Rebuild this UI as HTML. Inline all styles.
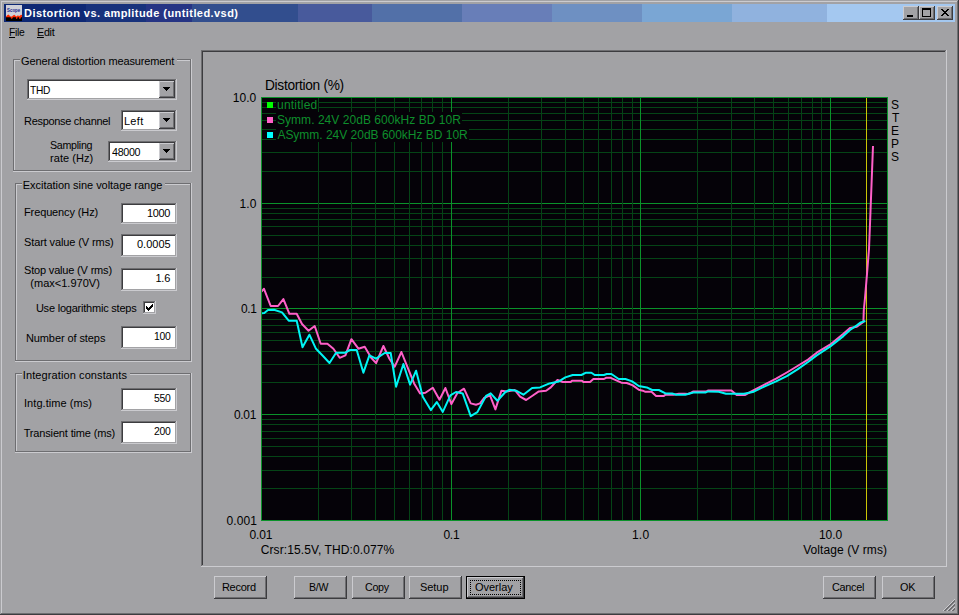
<!DOCTYPE html>
<html lang="en"><head><meta charset="utf-8"><title>Distortion vs. amplitude (untitled.vsd)</title>
<style>
html,body{margin:0;padding:0}
body{width:959px;height:615px;overflow:hidden;position:relative;background:#a2a2a5;font-family:"Liberation Sans", sans-serif;}
.r{position:absolute;box-sizing:border-box}
.t{position:absolute;white-space:nowrap;transform-origin:0 0;line-height:16px;color:#000;font-family:"Liberation Sans", sans-serif;font-size:11px}
.t u{text-decoration:underline;text-underline-offset:1px;text-decoration-thickness:1px}
svg{position:absolute;left:0;top:0}
</style></head><body>

<div class="r" style="left:1px;top:1px;width:957px;height:1px;background:#cbcbcf"></div><div class="r" style="left:1px;top:1px;width:1px;height:612px;background:#cbcbcf"></div>
<div class="r" style="left:0px;top:614px;width:959px;height:1px;background:#3c3c3f"></div><div class="r" style="left:958px;top:0px;width:1px;height:615px;background:#3c3c3f"></div>
<div class="r" style="left:1px;top:613px;width:957px;height:1px;background:#6e6e71"></div><div class="r" style="left:957px;top:1px;width:1px;height:613px;background:#6e6e71"></div>
<div class="r" style="left:4px;top:4px;width:82px;height:18px;background:#0e2874"></div>
<div class="r" style="left:86px;top:4px;width:60px;height:18px;background:#18327c"></div>
<div class="r" style="left:146px;top:4px;width:46px;height:18px;background:#263484"></div>
<div class="r" style="left:192px;top:4px;width:106px;height:18px;background:#324e8e"></div>
<div class="r" style="left:298px;top:4px;width:74px;height:18px;background:#485a9c"></div>
<div class="r" style="left:372px;top:4px;width:90px;height:18px;background:#5270a8"></div>
<div class="r" style="left:462px;top:4px;width:90px;height:18px;background:#687eb8"></div>
<div class="r" style="left:552px;top:4px;width:90px;height:18px;background:#6e90c2"></div>
<div class="r" style="left:642px;top:4px;width:90px;height:18px;background:#7aa6d4"></div>
<div class="r" style="left:732px;top:4px;width:95px;height:18px;background:#90b2de"></div>
<div class="r" style="left:827px;top:4px;width:128px;height:18px;background:#a4c8f0"></div>
<div class="r" style="left:6px;top:5px;width:16px;height:16px;background:#d0d0d8"></div>
<div class="r" style="left:6px;top:17px;width:16px;height:4px;background:#000"></div>
<svg width="959" height="615" viewBox="0 0 959 615" style="pointer-events:none"><path d="M6 16.500 L7.5 15 L8.5 14.6 L9.5 15.5 L10.5 16.500 L12 16.500 L13 15.6 L14.3 14.7 L15.5 15.8 L16 16.500 L17 16 L18 15.3 L19 16.300 L20 15.5 L21 14.8 L22 15 L22 17.300 L21 17.300 L20.2 18.900 L19.400 18.900 L19 17.300 L17.600 17.300 L17.100 19 L16.300 19 L16 17.300 L13 17.300 L12.100 18.700 L11.300 18.700 L10.5 17.300 L6 17.300 Z" fill="#ff2a00"/><text x="7" y="11.600" font-family="Liberation Sans, sans-serif" font-size="5.2" font-weight="700" fill="#20288a" textLength="13.2" lengthAdjust="spacingAndGlyphs">Scope</text></svg>
<span class="t" style="left:24.10px;top:5.00px;letter-spacing:0.434px;font-weight:700;color:#fff;">Distortion vs. amplitude (untitled.vsd)</span>
<div class="r" style="left:903px;top:6px;width:16px;height:14px;background:#3c3c3f"></div><div class="r" style="left:903px;top:6px;width:15px;height:13px;background:#cbcbcf"></div><div class="r" style="left:904px;top:7px;width:14px;height:12px;background:#6e6e71"></div><div class="r" style="left:904px;top:7px;width:13px;height:11px;background:#a2a2a5"></div>
<div class="r" style="left:919px;top:6px;width:16px;height:14px;background:#3c3c3f"></div><div class="r" style="left:919px;top:6px;width:15px;height:13px;background:#cbcbcf"></div><div class="r" style="left:920px;top:7px;width:14px;height:12px;background:#6e6e71"></div><div class="r" style="left:920px;top:7px;width:13px;height:11px;background:#a2a2a5"></div>
<div class="r" style="left:937px;top:6px;width:16px;height:14px;background:#3c3c3f"></div><div class="r" style="left:937px;top:6px;width:15px;height:13px;background:#cbcbcf"></div><div class="r" style="left:938px;top:7px;width:14px;height:12px;background:#6e6e71"></div><div class="r" style="left:938px;top:7px;width:13px;height:11px;background:#a2a2a5"></div>
<div class="r" style="left:907px;top:15px;width:6px;height:2px;background:#000"></div>
<div class="r" style="left:922px;top:8px;width:9px;height:9px;border:1px solid #000;border-top-width:2px"></div>
<div class="r" style="left:941px;top:9px;width:2px;height:1px;background:#000"></div>
<div class="r" style="left:947px;top:9px;width:2px;height:1px;background:#000"></div>
<div class="r" style="left:942px;top:10px;width:2px;height:1px;background:#000"></div>
<div class="r" style="left:946px;top:10px;width:2px;height:1px;background:#000"></div>
<div class="r" style="left:943px;top:11px;width:4px;height:1px;background:#000"></div>
<div class="r" style="left:944px;top:12px;width:2px;height:1px;background:#000"></div>
<div class="r" style="left:943px;top:13px;width:4px;height:1px;background:#000"></div>
<div class="r" style="left:942px;top:14px;width:2px;height:1px;background:#000"></div>
<div class="r" style="left:946px;top:14px;width:2px;height:1px;background:#000"></div>
<div class="r" style="left:941px;top:15px;width:2px;height:1px;background:#000"></div>
<div class="r" style="left:947px;top:15px;width:2px;height:1px;background:#000"></div>
<span class="t" style="left:9.46px;top:24.00px;letter-spacing:-0.300px;transform:scaleX(0.9404);"><u>F</u>ile</span><span class="t" style="left:37.42px;top:24.00px;letter-spacing:-0.300px;transform:scaleX(0.9766);"><u>E</u>dit</span>
<div class="r" style="left:13px;top:59px;width:7px;height:1px;background:#6e6e71"></div><div class="r" style="left:14px;top:60px;width:6px;height:1px;background:#cbcbcf"></div><div class="r" style="left:177px;top:59px;width:14px;height:1px;background:#6e6e71"></div><div class="r" style="left:177px;top:60px;width:13px;height:1px;background:#cbcbcf"></div><div class="r" style="left:13px;top:59px;width:1px;height:112px;background:#6e6e71"></div><div class="r" style="left:14px;top:60px;width:1px;height:110px;background:#cbcbcf"></div><div class="r" style="left:13px;top:170px;width:178px;height:1px;background:#6e6e71"></div><div class="r" style="left:13px;top:171px;width:179px;height:1px;background:#cbcbcf"></div><div class="r" style="left:190px;top:59px;width:1px;height:112px;background:#6e6e71"></div><div class="r" style="left:191px;top:59px;width:1px;height:113px;background:#cbcbcf"></div>
<span class="t" style="left:21.10px;top:53.00px;letter-spacing:-0.134px;">General distortion measurement</span>
<div class="r" style="left:15px;top:183px;width:7px;height:1px;background:#6e6e71"></div><div class="r" style="left:16px;top:184px;width:6px;height:1px;background:#cbcbcf"></div><div class="r" style="left:165px;top:183px;width:26px;height:1px;background:#6e6e71"></div><div class="r" style="left:165px;top:184px;width:25px;height:1px;background:#cbcbcf"></div><div class="r" style="left:15px;top:183px;width:1px;height:178px;background:#6e6e71"></div><div class="r" style="left:16px;top:184px;width:1px;height:176px;background:#cbcbcf"></div><div class="r" style="left:15px;top:360px;width:176px;height:1px;background:#6e6e71"></div><div class="r" style="left:15px;top:361px;width:177px;height:1px;background:#cbcbcf"></div><div class="r" style="left:190px;top:183px;width:1px;height:178px;background:#6e6e71"></div><div class="r" style="left:191px;top:183px;width:1px;height:179px;background:#cbcbcf"></div>
<span class="t" style="left:22.80px;top:177.00px;letter-spacing:-0.039px;">Excitation sine voltage range</span>
<div class="r" style="left:15px;top:373px;width:7px;height:1px;background:#6e6e71"></div><div class="r" style="left:16px;top:374px;width:6px;height:1px;background:#cbcbcf"></div><div class="r" style="left:130px;top:373px;width:61px;height:1px;background:#6e6e71"></div><div class="r" style="left:130px;top:374px;width:60px;height:1px;background:#cbcbcf"></div><div class="r" style="left:15px;top:373px;width:1px;height:79px;background:#6e6e71"></div><div class="r" style="left:16px;top:374px;width:1px;height:77px;background:#cbcbcf"></div><div class="r" style="left:15px;top:451px;width:176px;height:1px;background:#6e6e71"></div><div class="r" style="left:15px;top:452px;width:177px;height:1px;background:#cbcbcf"></div><div class="r" style="left:190px;top:373px;width:1px;height:79px;background:#6e6e71"></div><div class="r" style="left:191px;top:373px;width:1px;height:80px;background:#cbcbcf"></div>
<span class="t" style="left:22.80px;top:367.00px;letter-spacing:0.100px;">Integration constants</span>
<div class="r" style="left:27px;top:79px;width:150px;height:21px;background:#cbcbcf"></div><div class="r" style="left:27px;top:79px;width:149px;height:20px;background:#6e6e71"></div><div class="r" style="left:28px;top:80px;width:148px;height:19px;background:#a2a2a5"></div><div class="r" style="left:28px;top:80px;width:147px;height:18px;background:#3c3c3f"></div><div class="r" style="left:29px;top:81px;width:146px;height:17px;background:#fff"></div><div class="r" style="left:159px;top:81px;width:16px;height:17px;background:#3c3c3f"></div><div class="r" style="left:159px;top:81px;width:15px;height:16px;background:#cbcbcf"></div><div class="r" style="left:160px;top:82px;width:14px;height:15px;background:#6e6e71"></div><div class="r" style="left:160px;top:82px;width:13px;height:14px;background:#a2a2a5"></div><div class="r" style="left:163px;top:87px;width:7px;height:1px;background:#000"></div><div class="r" style="left:164px;top:88px;width:5px;height:1px;background:#000"></div><div class="r" style="left:165px;top:89px;width:3px;height:1px;background:#000"></div><div class="r" style="left:166px;top:90px;width:1px;height:1px;background:#000"></div><span class="t" style="left:30.10px;top:82.00px;letter-spacing:-0.300px;transform:scaleX(0.9252);">THD</span>
<span class="t" style="left:24.00px;top:113.00px;letter-spacing:-0.300px;transform:scaleX(0.9988);">Response channel</span><div class="r" style="left:121px;top:110px;width:56px;height:21px;background:#cbcbcf"></div><div class="r" style="left:121px;top:110px;width:55px;height:20px;background:#6e6e71"></div><div class="r" style="left:122px;top:111px;width:54px;height:19px;background:#a2a2a5"></div><div class="r" style="left:122px;top:111px;width:53px;height:18px;background:#3c3c3f"></div><div class="r" style="left:123px;top:112px;width:52px;height:17px;background:#fff"></div><div class="r" style="left:159px;top:112px;width:16px;height:17px;background:#3c3c3f"></div><div class="r" style="left:159px;top:112px;width:15px;height:16px;background:#cbcbcf"></div><div class="r" style="left:160px;top:113px;width:14px;height:15px;background:#6e6e71"></div><div class="r" style="left:160px;top:113px;width:13px;height:14px;background:#a2a2a5"></div><div class="r" style="left:163px;top:118px;width:7px;height:1px;background:#000"></div><div class="r" style="left:164px;top:119px;width:5px;height:1px;background:#000"></div><div class="r" style="left:165px;top:120px;width:3px;height:1px;background:#000"></div><div class="r" style="left:166px;top:121px;width:1px;height:1px;background:#000"></div><span class="t" style="left:123.90px;top:113.00px;letter-spacing:0.333px;">Left</span>
<span class="t" style="left:50.13px;top:137.00px;letter-spacing:-0.300px;transform:scaleX(0.9714);">Sampling</span><span class="t" style="left:50.10px;top:150.00px;letter-spacing:0.025px;">rate (Hz)</span><div class="r" style="left:108px;top:141px;width:69px;height:21px;background:#cbcbcf"></div><div class="r" style="left:108px;top:141px;width:68px;height:20px;background:#6e6e71"></div><div class="r" style="left:109px;top:142px;width:67px;height:19px;background:#a2a2a5"></div><div class="r" style="left:109px;top:142px;width:66px;height:18px;background:#3c3c3f"></div><div class="r" style="left:110px;top:143px;width:65px;height:17px;background:#fff"></div><div class="r" style="left:159px;top:143px;width:16px;height:17px;background:#3c3c3f"></div><div class="r" style="left:159px;top:143px;width:15px;height:16px;background:#cbcbcf"></div><div class="r" style="left:160px;top:144px;width:14px;height:15px;background:#6e6e71"></div><div class="r" style="left:160px;top:144px;width:13px;height:14px;background:#a2a2a5"></div><div class="r" style="left:163px;top:149px;width:7px;height:1px;background:#000"></div><div class="r" style="left:164px;top:150px;width:5px;height:1px;background:#000"></div><div class="r" style="left:165px;top:151px;width:3px;height:1px;background:#000"></div><div class="r" style="left:166px;top:152px;width:1px;height:1px;background:#000"></div><span class="t" style="left:112.40px;top:144.00px;letter-spacing:-0.300px;transform:scaleX(0.9722);">48000</span>
<span class="t" style="left:24.00px;top:204.00px;letter-spacing:-0.123px;">Frequency (Hz)</span><div class="r" style="left:121px;top:203px;width:56px;height:21px;background:#cbcbcf"></div><div class="r" style="left:121px;top:203px;width:55px;height:20px;background:#6e6e71"></div><div class="r" style="left:122px;top:204px;width:54px;height:19px;background:#a2a2a5"></div><div class="r" style="left:122px;top:204px;width:53px;height:18px;background:#3c3c3f"></div><div class="r" style="left:123px;top:205px;width:52px;height:17px;background:#fff"></div><span class="t" style="left:147.00px;top:205.00px;letter-spacing:-0.300px;transform:scaleX(0.9955);">1000</span>
<span class="t" style="left:24.00px;top:234.00px;letter-spacing:-0.111px;">Start value (V rms)</span><div class="r" style="left:121px;top:234px;width:56px;height:23px;background:#cbcbcf"></div><div class="r" style="left:121px;top:234px;width:55px;height:22px;background:#6e6e71"></div><div class="r" style="left:122px;top:235px;width:54px;height:21px;background:#a2a2a5"></div><div class="r" style="left:122px;top:235px;width:53px;height:20px;background:#3c3c3f"></div><div class="r" style="left:123px;top:236px;width:52px;height:19px;background:#fff"></div><span class="t" style="left:137.00px;top:236.00px;">0.0005</span>
<span class="t" style="left:24.00px;top:262.00px;letter-spacing:-0.176px;">Stop value (V rms)</span><div class="r" style="left:121px;top:268px;width:56px;height:23px;background:#cbcbcf"></div><div class="r" style="left:121px;top:268px;width:55px;height:22px;background:#6e6e71"></div><div class="r" style="left:122px;top:269px;width:54px;height:21px;background:#a2a2a5"></div><div class="r" style="left:122px;top:269px;width:53px;height:20px;background:#3c3c3f"></div><div class="r" style="left:123px;top:270px;width:52px;height:19px;background:#fff"></div><span class="t" style="left:155.50px;top:270.00px;letter-spacing:-0.250px;">1.6</span>
<span class="t" style="left:25.90px;top:330.00px;letter-spacing:-0.086px;">Number of steps</span><div class="r" style="left:121px;top:326px;width:56px;height:23px;background:#cbcbcf"></div><div class="r" style="left:121px;top:326px;width:55px;height:22px;background:#6e6e71"></div><div class="r" style="left:122px;top:327px;width:54px;height:21px;background:#a2a2a5"></div><div class="r" style="left:122px;top:327px;width:53px;height:20px;background:#3c3c3f"></div><div class="r" style="left:123px;top:328px;width:52px;height:19px;background:#fff"></div><span class="t" style="left:153.55px;top:328.00px;letter-spacing:-0.300px;transform:scaleX(0.9451);">100</span>
<span class="t" style="left:24.00px;top:395.00px;letter-spacing:0.062px;">Intg.time (ms)</span><div class="r" style="left:121px;top:388px;width:56px;height:23px;background:#cbcbcf"></div><div class="r" style="left:121px;top:388px;width:55px;height:22px;background:#6e6e71"></div><div class="r" style="left:122px;top:389px;width:54px;height:21px;background:#a2a2a5"></div><div class="r" style="left:122px;top:389px;width:53px;height:20px;background:#3c3c3f"></div><div class="r" style="left:123px;top:390px;width:52px;height:19px;background:#fff"></div><span class="t" style="left:153.55px;top:390.00px;letter-spacing:-0.300px;transform:scaleX(0.9451);">550</span>
<span class="t" style="left:23.70px;top:425.00px;letter-spacing:-0.156px;">Transient time (ms)</span><div class="r" style="left:121px;top:421px;width:56px;height:23px;background:#cbcbcf"></div><div class="r" style="left:121px;top:421px;width:55px;height:22px;background:#6e6e71"></div><div class="r" style="left:122px;top:422px;width:54px;height:21px;background:#a2a2a5"></div><div class="r" style="left:122px;top:422px;width:53px;height:20px;background:#3c3c3f"></div><div class="r" style="left:123px;top:423px;width:52px;height:19px;background:#fff"></div><span class="t" style="left:153.55px;top:423.00px;letter-spacing:-0.300px;transform:scaleX(0.9451);">200</span>
<span class="t" style="left:30.30px;top:275.00px;letter-spacing:0.009px;">(max&lt;1.970V)</span>
<span class="t" style="left:35.90px;top:300.00px;letter-spacing:-0.215px;">Use logarithmic steps</span><div class="r" style="left:143px;top:301px;width:13px;height:13px;background:#cbcbcf"></div><div class="r" style="left:143px;top:301px;width:12px;height:12px;background:#6e6e71"></div><div class="r" style="left:144px;top:302px;width:11px;height:11px;background:#a2a2a5"></div><div class="r" style="left:144px;top:302px;width:10px;height:10px;background:#3c3c3f"></div><div class="r" style="left:145px;top:303px;width:9px;height:9px;background:#fff"></div>
<div class="r" style="left:146px;top:306px;width:1px;height:3px;background:#000"></div>
<div class="r" style="left:147px;top:307px;width:1px;height:3px;background:#000"></div>
<div class="r" style="left:148px;top:308px;width:1px;height:3px;background:#000"></div>
<div class="r" style="left:149px;top:307px;width:1px;height:3px;background:#000"></div>
<div class="r" style="left:150px;top:306px;width:1px;height:3px;background:#000"></div>
<div class="r" style="left:151px;top:305px;width:1px;height:3px;background:#000"></div>
<div class="r" style="left:152px;top:304px;width:1px;height:3px;background:#000"></div>
<div class="r" style="left:201px;top:50px;width:746px;height:517px;background:#cbcbcf"></div><div class="r" style="left:201px;top:50px;width:745px;height:516px;background:#6e6e71"></div><div class="r" style="left:202px;top:51px;width:744px;height:515px;background:#a2a2a5"></div><div class="r" style="left:202px;top:51px;width:743px;height:514px;background:#3c3c3f"></div><div class="r" style="left:203px;top:52px;width:742px;height:513px;background:#a2a2a5"></div>
<svg width="959" height="615" viewBox="0 0 959 615" shape-rendering="crispEdges"><rect x="261" y="97" width="627" height="424" fill="#050208"/><rect x="261" y="488" width="627" height="1" fill="#054416"/><rect x="261" y="470" width="627" height="1" fill="#054416"/><rect x="261" y="456" width="627" height="1" fill="#054416"/><rect x="261" y="446" width="627" height="1" fill="#054416"/><rect x="261" y="438" width="627" height="1" fill="#054416"/><rect x="261" y="431" width="627" height="1" fill="#054416"/><rect x="261" y="424" width="627" height="1" fill="#054416"/><rect x="261" y="419" width="627" height="1" fill="#054416"/><rect x="261" y="414" width="627" height="1" fill="#0a922a"/><rect x="261" y="382" width="627" height="1" fill="#054416"/><rect x="261" y="364" width="627" height="1" fill="#054416"/><rect x="261" y="351" width="627" height="1" fill="#054416"/><rect x="261" y="340" width="627" height="1" fill="#054416"/><rect x="261" y="332" width="627" height="1" fill="#054416"/><rect x="261" y="325" width="627" height="1" fill="#054416"/><rect x="261" y="319" width="627" height="1" fill="#054416"/><rect x="261" y="313" width="627" height="1" fill="#054416"/><rect x="261" y="308" width="627" height="1" fill="#0a922a"/><rect x="261" y="277" width="627" height="1" fill="#054416"/><rect x="261" y="258" width="627" height="1" fill="#054416"/><rect x="261" y="245" width="627" height="1" fill="#054416"/><rect x="261" y="235" width="627" height="1" fill="#054416"/><rect x="261" y="226" width="627" height="1" fill="#054416"/><rect x="261" y="219" width="627" height="1" fill="#054416"/><rect x="261" y="213" width="627" height="1" fill="#054416"/><rect x="261" y="208" width="627" height="1" fill="#054416"/><rect x="261" y="203" width="627" height="1" fill="#0a922a"/><rect x="261" y="171" width="627" height="1" fill="#054416"/><rect x="261" y="152" width="627" height="1" fill="#054416"/><rect x="261" y="139" width="627" height="1" fill="#054416"/><rect x="261" y="129" width="627" height="1" fill="#054416"/><rect x="261" y="120" width="627" height="1" fill="#054416"/><rect x="261" y="113" width="627" height="1" fill="#054416"/><rect x="261" y="107" width="627" height="1" fill="#054416"/><rect x="261" y="102" width="627" height="1" fill="#054416"/><rect x="318" y="97" width="1" height="424" fill="#054416"/><rect x="351" y="97" width="1" height="424" fill="#054416"/><rect x="375" y="97" width="1" height="424" fill="#054416"/><rect x="394" y="97" width="1" height="424" fill="#054416"/><rect x="409" y="97" width="1" height="424" fill="#054416"/><rect x="421" y="97" width="1" height="424" fill="#054416"/><rect x="432" y="97" width="1" height="424" fill="#054416"/><rect x="442" y="97" width="1" height="424" fill="#054416"/><rect x="451" y="97" width="1" height="424" fill="#0a922a"/><rect x="508" y="97" width="1" height="424" fill="#054416"/><rect x="541" y="97" width="1" height="424" fill="#054416"/><rect x="565" y="97" width="1" height="424" fill="#054416"/><rect x="583" y="97" width="1" height="424" fill="#054416"/><rect x="598" y="97" width="1" height="424" fill="#054416"/><rect x="611" y="97" width="1" height="424" fill="#054416"/><rect x="622" y="97" width="1" height="424" fill="#054416"/><rect x="632" y="97" width="1" height="424" fill="#054416"/><rect x="640" y="97" width="1" height="424" fill="#0a922a"/><rect x="697" y="97" width="1" height="424" fill="#054416"/><rect x="731" y="97" width="1" height="424" fill="#054416"/><rect x="754" y="97" width="1" height="424" fill="#054416"/><rect x="773" y="97" width="1" height="424" fill="#054416"/><rect x="788" y="97" width="1" height="424" fill="#054416"/><rect x="801" y="97" width="1" height="424" fill="#054416"/><rect x="812" y="97" width="1" height="424" fill="#054416"/><rect x="821" y="97" width="1" height="424" fill="#054416"/><rect x="830" y="97" width="1" height="424" fill="#0a922a"/><rect x="261.5" y="97.5" width="626" height="423" fill="none" stroke="#0a922a" stroke-width="1"/><rect x="276" y="98" width="42" height="14" fill="#050208"/><rect x="276" y="112" width="186" height="15" fill="#050208"/><rect x="276" y="127" width="193" height="15" fill="#050208"/><rect x="267" y="102" width="6" height="6" fill="#00ff00"/><rect x="267" y="117" width="6" height="6" fill="#ff60c8"/><rect x="267" y="132" width="6" height="6" fill="#00ffff"/><rect x="866" y="98" width="1" height="422" fill="#cac404"/></svg>
<svg width="959" height="615" viewBox="0 0 959 615"><clipPath id="pc"><rect x="262" y="98" width="625" height="422"/></clipPath><polyline clip-path="url(#pc)" points="261.5,291.5 264.0,288.8 270.7,306.0 278.0,306.0 283.4,299.1 289.4,313.8 296.7,313.8 302.0,324.0 308.5,330.7 314.7,326.0 320.7,343.7 327.4,343.7 333.4,348.7 339.7,357.8 345.4,355.3 351.4,339.2 358.4,348.7 364.7,346.7 371.0,357.5 376.1,363.2 383.4,346.0 389.4,358.7 394.7,366.7 401.4,352.0 408.1,368.7 414.1,383.4 420.1,393.4 425.4,392.8 432.8,387.7 439.5,399.7 445.4,388.0 451.4,404.1 457.4,393.0 464.0,388.7 470.7,403.4 476.0,404.7 480.0,403.4 484.0,398.0 490.0,395.4 495.4,409.4 501.4,390.7 506.8,391.4 514.8,390.0 520.1,396.7 526.1,400.0 532.1,396.0 538.8,391.4 546.1,390.7 550.8,387.4 557.5,380.0 562.8,382.0 570.7,382.0 572.0,380.7 582.0,380.7 583.4,382.0 590.0,382.0 593.4,379.0 604.0,379.0 606.0,377.8 610.7,377.8 621.4,382.7 626.8,383.0 632.8,385.4 638.8,389.7 642.8,390.7 645.4,391.8 651.5,391.8 656.1,396.1 663.5,396.1 665.5,394.7 673.5,394.7 678.8,393.8 684.8,393.8 688.0,394.0 690.7,392.8 693.4,391.4 706.7,391.4 708.0,390.5 731.4,390.5 736.7,395.0 744.8,395.0 752.8,390.7 765.4,384.1 776.1,378.7 786.8,372.5 797.5,366.0 808.0,359.6 816.7,352.7 830.0,344.7 843.4,333.8 850.0,328.0 856.8,326.7 863.4,322.0 863.8,310.0 865.0,298.0 867.0,274.0 869.0,249.0 870.0,224.0 871.0,198.0 872.0,172.0 873.0,146.0" fill="none" stroke="#ff60c8" stroke-width="2" stroke-linejoin="round" stroke-linecap="butt"/><polyline clip-path="url(#pc)" points="261.5,313.2 264.3,313.0 268.0,310.0 274.0,309.8 282.0,312.4 288.7,320.7 296.7,320.7 302.5,347.2 309.4,334.7 316.0,348.8 323.0,356.0 329.5,363.0 336.1,352.8 344.8,352.8 350.0,350.0 356.7,350.0 363.4,372.7 369.4,355.4 376.0,358.7 384.7,353.0 390.7,353.0 396.1,386.7 403.4,364.0 410.1,384.7 416.1,370.7 422.8,396.8 430.8,410.1 436.8,402.1 442.8,411.9 450.4,395.4 456.0,392.0 462.7,393.4 470.7,416.1 477.4,412.1 486.0,396.0 490.7,393.4 497.4,400.7 505.4,392.0 509.4,389.8 516.1,390.7 523.4,394.7 532.1,388.0 540.1,387.4 549.5,383.4 558.8,381.4 565.3,377.4 572.7,375.0 581.4,375.0 586.0,372.7 591.4,372.7 594.7,375.0 604.0,375.0 606.7,374.0 611.4,374.0 618.7,379.0 625.4,379.0 632.1,381.4 638.8,386.0 646.8,387.4 652.1,390.0 658.8,390.0 665.5,393.4 672.1,393.4 676.1,394.7 685.3,394.8 693.4,392.5 705.4,392.5 708.0,391.4 718.7,391.7 726.0,393.7 744.0,393.7 752.8,392.1 765.4,386.1 776.1,381.4 786.8,376.1 797.5,369.4 808.0,362.0 816.7,355.4 830.0,346.7 843.4,336.1 850.0,330.0 856.8,325.4 860.8,322.4 865.4,321.0" fill="none" stroke="#00f4f4" stroke-width="2" stroke-linejoin="round" stroke-linecap="butt"/></svg>
<span class="t" style="left:264.81px;top:78.00px;font-size:13.8px;letter-spacing:-0.300px;transform:scaleX(0.9936);">Distortion (%)</span>
<span class="t" style="left:232.80px;top:90.00px;font-size:12px;">10.0</span>
<span class="t" style="left:239.50px;top:196.00px;font-size:12px;letter-spacing:0.150px;">1.0</span>
<span class="t" style="left:240.50px;top:301.00px;font-size:12px;letter-spacing:-0.300px;transform:scaleX(0.9935);">0.1</span>
<span class="t" style="left:233.80px;top:407.00px;font-size:12px;letter-spacing:-0.300px;transform:scaleX(0.9955);">0.01</span>
<span class="t" style="left:226.50px;top:513.00px;font-size:12px;letter-spacing:0.075px;">0.001</span>
<span class="t" style="left:249.60px;top:527.00px;font-size:12px;letter-spacing:-0.167px;">0.01</span>
<span class="t" style="left:443.40px;top:527.00px;font-size:12px;letter-spacing:-0.250px;">0.1</span>
<span class="t" style="left:631.90px;top:527.00px;font-size:12px;letter-spacing:0.250px;">1.0</span>
<span class="t" style="left:818.90px;top:527.00px;font-size:12px;">10.0</span>
<span class="t" style="left:260.70px;top:542.00px;font-size:12px;letter-spacing:0.100px;">Crsr:15.5V, THD:0.077%</span>
<span class="t" style="left:803.20px;top:542.00px;font-size:12px;letter-spacing:0.079px;">Voltage (V rms)</span>
<span class="t" style="left:890.90px;top:97.00px;font-size:12px;">S</span>
<span class="t" style="left:891.90px;top:110.00px;font-size:12px;">T</span>
<span class="t" style="left:890.90px;top:123.00px;font-size:12px;">E</span>
<span class="t" style="left:890.90px;top:136.00px;font-size:12px;">P</span>
<span class="t" style="left:890.90px;top:149.00px;font-size:12px;">S</span>
<span class="t" style="left:277.00px;top:97.00px;font-size:12px;letter-spacing:0.229px;color:#0e8e2c;">untitled</span>
<span class="t" style="left:277.00px;top:112.00px;font-size:12px;letter-spacing:0.041px;color:#0e8e2c;">Symm. 24V 20dB 600kHz BD 10R</span>
<span class="t" style="left:277.40px;top:127.00px;font-size:12px;letter-spacing:-0.014px;color:#0e8e2c;">ASymm. 24V 20dB 600kHz BD 10R</span>
<div class="r" style="left:214px;top:576px;width:53px;height:23px;background:#3c3c3f"></div><div class="r" style="left:214px;top:576px;width:52px;height:22px;background:#cbcbcf"></div><div class="r" style="left:215px;top:577px;width:51px;height:21px;background:#6e6e71"></div><div class="r" style="left:215px;top:577px;width:50px;height:20px;background:#a2a2a5"></div><span class="t" style="left:221.90px;top:579.00px;letter-spacing:-0.240px;">Record</span>
<div class="r" style="left:294px;top:576px;width:53px;height:23px;background:#3c3c3f"></div><div class="r" style="left:294px;top:576px;width:52px;height:22px;background:#cbcbcf"></div><div class="r" style="left:295px;top:577px;width:51px;height:21px;background:#6e6e71"></div><div class="r" style="left:295px;top:577px;width:50px;height:20px;background:#a2a2a5"></div><span class="t" style="left:308.74px;top:579.00px;letter-spacing:-0.300px;transform:scaleX(0.9588);">B/W</span>
<div class="r" style="left:352px;top:576px;width:53px;height:23px;background:#3c3c3f"></div><div class="r" style="left:352px;top:576px;width:52px;height:22px;background:#cbcbcf"></div><div class="r" style="left:353px;top:577px;width:51px;height:21px;background:#6e6e71"></div><div class="r" style="left:353px;top:577px;width:50px;height:20px;background:#a2a2a5"></div><span class="t" style="left:365.13px;top:579.00px;letter-spacing:-0.300px;transform:scaleX(0.9710);">Copy</span>
<div class="r" style="left:409px;top:576px;width:53px;height:23px;background:#3c3c3f"></div><div class="r" style="left:409px;top:576px;width:52px;height:22px;background:#cbcbcf"></div><div class="r" style="left:410px;top:577px;width:51px;height:21px;background:#6e6e71"></div><div class="r" style="left:410px;top:577px;width:50px;height:20px;background:#a2a2a5"></div><span class="t" style="left:420.00px;top:579.00px;letter-spacing:-0.050px;">Setup</span>
<div class="r" style="left:466px;top:576px;width:59px;height:23px;background:#000"></div><div class="r" style="left:467px;top:577px;width:57px;height:21px;background:#3c3c3f"></div><div class="r" style="left:467px;top:577px;width:56px;height:20px;background:#cbcbcf"></div><div class="r" style="left:468px;top:578px;width:55px;height:19px;background:#6e6e71"></div><div class="r" style="left:468px;top:578px;width:54px;height:18px;background:#a2a2a5"></div><div class="r" style="left:470px;top:580px;width:51px;height:15px;border:1px dotted #000"></div><span class="t" style="left:474.90px;top:579.00px;">Overlay</span>
<div class="r" style="left:823px;top:576px;width:53px;height:23px;background:#3c3c3f"></div><div class="r" style="left:823px;top:576px;width:52px;height:22px;background:#cbcbcf"></div><div class="r" style="left:824px;top:577px;width:51px;height:21px;background:#6e6e71"></div><div class="r" style="left:824px;top:577px;width:50px;height:20px;background:#a2a2a5"></div><span class="t" style="left:831.91px;top:579.00px;letter-spacing:-0.300px;transform:scaleX(0.9873);">Cancel</span>
<div class="r" style="left:882px;top:576px;width:53px;height:23px;background:#3c3c3f"></div><div class="r" style="left:882px;top:576px;width:52px;height:22px;background:#cbcbcf"></div><div class="r" style="left:883px;top:577px;width:51px;height:21px;background:#6e6e71"></div><div class="r" style="left:883px;top:577px;width:50px;height:20px;background:#a2a2a5"></div><span class="t" style="left:899.91px;top:579.00px;letter-spacing:-0.300px;transform:scaleX(0.9854);">OK</span>
<div class="r" style="left:954px;top:599px;width:1px;height:1px;background:#cbcbcf"></div>
<div class="r" style="left:953px;top:600px;width:1px;height:1px;background:#cbcbcf"></div>
<div class="r" style="left:952px;top:601px;width:1px;height:1px;background:#cbcbcf"></div>
<div class="r" style="left:951px;top:602px;width:1px;height:1px;background:#cbcbcf"></div>
<div class="r" style="left:950px;top:603px;width:1px;height:1px;background:#cbcbcf"></div>
<div class="r" style="left:949px;top:604px;width:1px;height:1px;background:#cbcbcf"></div>
<div class="r" style="left:948px;top:605px;width:1px;height:1px;background:#cbcbcf"></div>
<div class="r" style="left:947px;top:606px;width:1px;height:1px;background:#cbcbcf"></div>
<div class="r" style="left:946px;top:607px;width:1px;height:1px;background:#cbcbcf"></div>
<div class="r" style="left:945px;top:608px;width:1px;height:1px;background:#cbcbcf"></div>
<div class="r" style="left:944px;top:609px;width:1px;height:1px;background:#cbcbcf"></div>
<div class="r" style="left:943px;top:610px;width:1px;height:1px;background:#cbcbcf"></div>
<div class="r" style="left:954px;top:600px;width:1px;height:1px;background:#6e6e71"></div>
<div class="r" style="left:953px;top:601px;width:1px;height:1px;background:#6e6e71"></div>
<div class="r" style="left:952px;top:602px;width:1px;height:1px;background:#6e6e71"></div>
<div class="r" style="left:951px;top:603px;width:1px;height:1px;background:#6e6e71"></div>
<div class="r" style="left:950px;top:604px;width:1px;height:1px;background:#6e6e71"></div>
<div class="r" style="left:949px;top:605px;width:1px;height:1px;background:#6e6e71"></div>
<div class="r" style="left:948px;top:606px;width:1px;height:1px;background:#6e6e71"></div>
<div class="r" style="left:947px;top:607px;width:1px;height:1px;background:#6e6e71"></div>
<div class="r" style="left:946px;top:608px;width:1px;height:1px;background:#6e6e71"></div>
<div class="r" style="left:945px;top:609px;width:1px;height:1px;background:#6e6e71"></div>
<div class="r" style="left:944px;top:610px;width:1px;height:1px;background:#6e6e71"></div>
<div class="r" style="left:954px;top:601px;width:1px;height:1px;background:#6e6e71"></div>
<div class="r" style="left:953px;top:602px;width:1px;height:1px;background:#6e6e71"></div>
<div class="r" style="left:952px;top:603px;width:1px;height:1px;background:#6e6e71"></div>
<div class="r" style="left:951px;top:604px;width:1px;height:1px;background:#6e6e71"></div>
<div class="r" style="left:950px;top:605px;width:1px;height:1px;background:#6e6e71"></div>
<div class="r" style="left:949px;top:606px;width:1px;height:1px;background:#6e6e71"></div>
<div class="r" style="left:948px;top:607px;width:1px;height:1px;background:#6e6e71"></div>
<div class="r" style="left:947px;top:608px;width:1px;height:1px;background:#6e6e71"></div>
<div class="r" style="left:946px;top:609px;width:1px;height:1px;background:#6e6e71"></div>
<div class="r" style="left:945px;top:610px;width:1px;height:1px;background:#6e6e71"></div>
<div class="r" style="left:954px;top:603px;width:1px;height:1px;background:#cbcbcf"></div>
<div class="r" style="left:953px;top:604px;width:1px;height:1px;background:#cbcbcf"></div>
<div class="r" style="left:952px;top:605px;width:1px;height:1px;background:#cbcbcf"></div>
<div class="r" style="left:951px;top:606px;width:1px;height:1px;background:#cbcbcf"></div>
<div class="r" style="left:950px;top:607px;width:1px;height:1px;background:#cbcbcf"></div>
<div class="r" style="left:949px;top:608px;width:1px;height:1px;background:#cbcbcf"></div>
<div class="r" style="left:948px;top:609px;width:1px;height:1px;background:#cbcbcf"></div>
<div class="r" style="left:947px;top:610px;width:1px;height:1px;background:#cbcbcf"></div>
<div class="r" style="left:954px;top:604px;width:1px;height:1px;background:#6e6e71"></div>
<div class="r" style="left:953px;top:605px;width:1px;height:1px;background:#6e6e71"></div>
<div class="r" style="left:952px;top:606px;width:1px;height:1px;background:#6e6e71"></div>
<div class="r" style="left:951px;top:607px;width:1px;height:1px;background:#6e6e71"></div>
<div class="r" style="left:950px;top:608px;width:1px;height:1px;background:#6e6e71"></div>
<div class="r" style="left:949px;top:609px;width:1px;height:1px;background:#6e6e71"></div>
<div class="r" style="left:948px;top:610px;width:1px;height:1px;background:#6e6e71"></div>
<div class="r" style="left:954px;top:605px;width:1px;height:1px;background:#6e6e71"></div>
<div class="r" style="left:953px;top:606px;width:1px;height:1px;background:#6e6e71"></div>
<div class="r" style="left:952px;top:607px;width:1px;height:1px;background:#6e6e71"></div>
<div class="r" style="left:951px;top:608px;width:1px;height:1px;background:#6e6e71"></div>
<div class="r" style="left:950px;top:609px;width:1px;height:1px;background:#6e6e71"></div>
<div class="r" style="left:949px;top:610px;width:1px;height:1px;background:#6e6e71"></div>
<div class="r" style="left:954px;top:607px;width:1px;height:1px;background:#cbcbcf"></div>
<div class="r" style="left:953px;top:608px;width:1px;height:1px;background:#cbcbcf"></div>
<div class="r" style="left:952px;top:609px;width:1px;height:1px;background:#cbcbcf"></div>
<div class="r" style="left:951px;top:610px;width:1px;height:1px;background:#cbcbcf"></div>
<div class="r" style="left:954px;top:608px;width:1px;height:1px;background:#6e6e71"></div>
<div class="r" style="left:953px;top:609px;width:1px;height:1px;background:#6e6e71"></div>
<div class="r" style="left:952px;top:610px;width:1px;height:1px;background:#6e6e71"></div>
<div class="r" style="left:954px;top:609px;width:1px;height:1px;background:#6e6e71"></div>
<div class="r" style="left:953px;top:610px;width:1px;height:1px;background:#6e6e71"></div>
</body></html>
